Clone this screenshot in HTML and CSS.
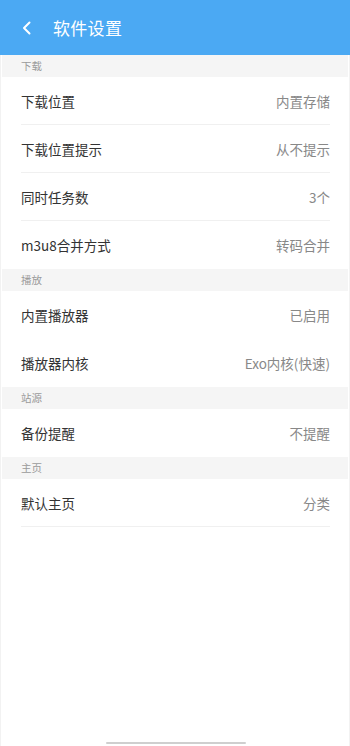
FILE: index.html
```html
<!DOCTYPE html>
<html lang="zh">
<head>
<meta charset="utf-8">
<link rel="stylesheet" href="styles.css">
</head>
<body>
<div class="app">
  <header class="topbar">
    <svg class="back" width="12" height="14" viewBox="0 0 12 14"><path d="M8.5 1.5 L3 7 L8.5 12.5" fill="none" stroke="#fff" stroke-width="2" stroke-linecap="round" stroke-linejoin="round"/></svg>
    <h1 class="title">软件设置</h1>
  </header>
  <main class="list">
    <div class="section">下载</div>
    <div class="row line"><span class="label">下载位置</span><span class="value">内置存储</span></div>
    <div class="row line"><span class="label">下载位置提示</span><span class="value">从不提示</span></div>
    <div class="row line"><span class="label">同时任务数</span><span class="value">3个</span></div>
    <div class="row"><span class="label">m3u8合并方式</span><span class="value">转码合并</span></div>
    <div class="section">播放</div>
    <div class="row"><span class="label">内置播放器</span><span class="value">已启用</span></div>
    <div class="row"><span class="label">播放器内核</span><span class="value">Exo内核(快速)</span></div>
    <div class="section">站源</div>
    <div class="row"><span class="label">备份提醒</span><span class="value">不提醒</span></div>
    <div class="section">主页</div>
    <div class="row line"><span class="label">默认主页</span><span class="value">分类</span></div>
  </main>
  <div class="home-indicator"></div>
</div>
</body>
</html>
```
FILE: styles.css
```css
html, body {
  margin: 0;
  padding: 0;
  background: #fff;
}
body {
  font-family: "Noto Sans CJK SC", "Noto Sans", Roboto, sans-serif;
  width: 350px;
  height: 746px;
  overflow: hidden;
}
.app {
  position: relative;
  height: 746px;
  display: flex;
  flex-direction: column;
  border-left: 1px solid #f2f2f2;
  border-right: 1px solid #f2f2f2;
  box-sizing: border-box;
}
.topbar {
  height: 55px;
  background: #4ba9f3;
  display: flex;
  align-items: center;
  margin: 0 -1px;
  padding-left: 21px;
  box-sizing: border-box;
}
.back {
  display: block;
  margin-top: 1px;
}
.title {
  margin: 0 0 0 20px;
  font-size: 17px;
  font-weight: normal;
  color: #fff;
  letter-spacing: 0.3px;
}
.list {
  display: flex;
  flex-direction: column;
  padding: 0 1px;
}
.section {
  height: 22px;
  background: #f5f5f5;
  color: #9a9a9a;
  font-size: 10.5px;
  line-height: 22px;
  padding-left: 19px;
}
.row {
  height: 48px;
  margin: 0 18px 0 19px;
  display: flex;
  align-items: center;
  justify-content: space-between;
  box-sizing: border-box;
  font-size: 13.5px;
}
.row.line {
  border-bottom: 1px solid #f0f0f0;
}
.label {
  color: #333;
}
.value {
  color: #888;
}
.home-indicator {
  position: absolute;
  left: 105px;
  bottom: 2px;
  width: 140px;
  height: 2px;
  background: #cfcfcf;
  border-radius: 1px;
}
```
